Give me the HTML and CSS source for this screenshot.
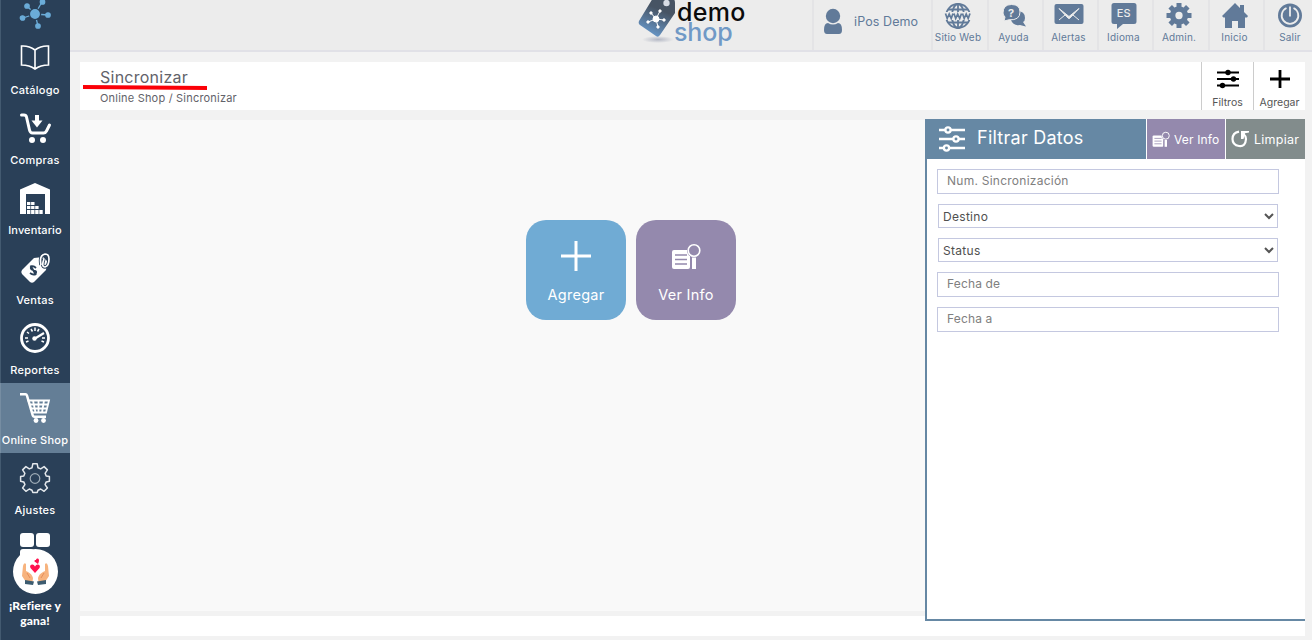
FILE: index.html
```html
<!DOCTYPE html>
<html lang="es">
<head>
<meta charset="utf-8">
<title>Sincronizar</title>
<link rel="stylesheet" href="styles.css">
</head>
<body>
<div class="app">
  <nav class="sidebar">
    <div class="brand"><svg width="32" height="34" viewBox="0 0 32 34"><g stroke="#6bacd8" stroke-width="1.300" fill="#6bacd8"><path d="M16 14 8 6M16 14 23 2M16 14 4 18M16 14 29 15M16 14 19 26"/><circle cx="16" cy="14" r="5.600" stroke="#2a4058"/><circle cx="8" cy="6" r="2.200"/><circle cx="23.500" cy="2" r="2.200"/><circle cx="3.500" cy="18" r="2.200"/><circle cx="29" cy="15" r="2.200"/><circle cx="19" cy="26" r="2.200"/></g></svg></div>
    <a class="nav-item"><svg viewBox="0 0 30 30" fill="none" stroke="#fff" stroke-width="1.600"><path d="M15 7Q9 2.500 1.500 3v19q8 0 13.500 4 5.500-4 13.500-4V3Q21 2.500 15 7v19"/></svg><span>Catálogo</span></a>
    <a class="nav-item"><svg viewBox="0 0 30 30" fill="none" stroke="#fff" stroke-width="3"><path d="M1.500 2H4q2 0 2.500 2l3 13q.7 3 3 3h11q2 0 3-2l3-6" stroke-linecap="round" stroke-linejoin="round"/><path d="M17 2v6" stroke-width="4"/><path d="M11.500 7.500h11L17 14.500z" fill="#fff" stroke="none"/><circle cx="12" cy="27" r="3" fill="#fff" stroke="none"/><circle cx="23" cy="27" r="3" fill="#fff" stroke="none"/></svg><span>Compras</span></a>
    <a class="nav-item"><svg viewBox="0 0 30 30"><path fill="#fff" d="M0 31V6.500L15 0l15 6.500V31h-5V11H6v20z"/><path fill="#fff" d="M7 19h3.400v3H7zm4.100 0h3.400v3h-3.400zM7 23h3.400v3H7zm4.100 0h3.400v3h-3.400zm4.100 0h3.400v3h-3.400zM7 27h3.400v4H7zm4.100 0h3.400v4h-3.400zm4.100 0h3.400v4h-3.400zm4.100 0h3.400v4h-3.400z"/></svg><span class="tight">Inventario</span></a>
    <a class="nav-item"><svg viewBox="0 0 30 30"><path fill="#fff" d="m14 5 9-1 4 4-1 9-12 12q-2 1.500-4 0l-8-8q-1.500-2 0-4z"/><path d="M21 12q-2-10 4-11 4 0 4 5 0 7-4 8-4 0-1-8" fill="none" stroke="#2a4058" stroke-width="3.400"/><path d="M21 12q-2-10 4-11 4 0 4 5 0 7-4 8-4 0-1-8" fill="none" stroke="#fff" stroke-width="1.700"/><path d="M16 15q-3-3-5-1-1 2 2 3 4 1 3 3-2 3-6 0M10.500 12.500l5.500 9.500" fill="none" stroke="#2a4058" stroke-width="1.800"/></svg><span>Ventas</span></a>
    <a class="nav-item"><svg viewBox="0 0 30 30" fill="none" stroke="#fff"><circle cx="15" cy="15" r="13.500" stroke-width="2.800"/><path d="M5 15h3M7 9l2 1.500M11 6l1.500 2.500M15 4.500V8M19 6l-1.500 2.500M25 15h-3M6 19l2.500-1M24 19l-2.500-1" stroke-width="1.500"/><path d="m15 15.500 9-5.500" stroke-width="2.200"/><circle cx="14.500" cy="15.500" r="2.200" fill="#fff" stroke="none"/></svg><span>Reportes</span></a>
    <a class="nav-item active"><svg viewBox="0 0 30 30" fill="none" stroke="#fff" stroke-width="1.800"><path d="M0 1.200h5.500q1 0 1.500 1.500l5.500 19q.5 2 2 2H26" stroke-width="2.500"/><path d="M7.500 7.500H29L26 19.500H11.500M9 11.500h19M10.500 15.500H27M13 7.500l2.500 12M18.500 7.500V19.500M24 7.500l-2 12"/><circle cx="16" cy="27.500" r="2.400" fill="#fff" stroke="none"/><circle cx="23.500" cy="27.500" r="2.400" fill="#fff" stroke="none"/></svg><span>Online Shop</span></a>
    <a class="nav-item"><svg viewBox="0 0 30 30" fill="none" stroke="#e4e8ec" stroke-width="1.500"><path stroke-linejoin="round" d="M12.800.8h4.400l.8 4 2.700 1.100 3.400-2.300 3.300 3.300-2.300 3.400 1.100 2.700 3.200.6v4.600l-3.200.7-1.100 2.700 2.300 3.400-3.300 3.300-3.400-2.300L18 27.200l-.8 2.200h-4.400l-.8-2.200L9.300 26l-3.400 2.300L2.600 25l2.300-3.400-1.100-2.700-3.200-.7v-4.600l3.200-.6 1.100-2.700-2.300-3.400 3.300-3.300 3.400 2.300L12 4.800z"/><circle cx="15" cy="15.500" r="4.800" stroke="#9eabb6" stroke-width="1.200"/></svg><span>Ajustes</span></a>
    <div class="refer">
      <div class="tiles"><i></i><i></i><i></i></div>
      <div class="refer-badge"><svg width="45" height="45" viewBox="0 0 45 45"><circle cx="22.500" cy="22.500" r="22.500" fill="#fff"/><path fill="#ff124f" d="M22 24 17.500 19q-1.300-3 1.500-3.500 2-.2 3 2 1-2.200 3-2 2.800.5 1.500 3.500zM25 15l-3.500-2.500q-.5-2 1.500-1.500 0-2 2-1.500 2 1 0 5.500z"/><g id="hand"><path fill="#f7b37e" d="M13 33 9 27l1-10q1-4 3-2v7l2 1q4 2 5 6l-.5 4z"/><path d="m14 24 3 5" stroke="#e68e5b" fill="none"/><path fill="#3d5c70" d="m12 31 9 1.500-1 3.500-8-1z"/></g><use href="#hand" transform="matrix(-1 0 0 1 45 0)"/></svg></div>
      <div class="refer-text">¡Refiere y<br>gana!</div>
    </div>
  </nav>

  <div class="content">
    <header class="topbar">
      <div class="logo">
        <svg width="40" height="46" viewBox="0 0 40 46"><defs><linearGradient id="tag" x1=".7" y1="0" x2=".3" y2="1"><stop offset=".3" stop-color="#475464"/><stop offset="1" stop-color="#699bcf"/></linearGradient><radialGradient id="shade"><stop stop-color="#b4b8c5"/><stop offset="1" stop-color="#ececec"/></radialGradient></defs><ellipse cx="20" cy="39.500" rx="16" ry="3.500" fill="url(#shade)"/><path fill="url(#tag)" d="M15-2h19q3 1 3 5v10L22 35q-2 3-4 1L2 25q-2-1-1-4z"/><circle cx="28.500" cy="3" r="3.200" fill="#d7dce5"/><g stroke="#fff" stroke-width="1" fill="#fff"><path d="m18 19-5-6M18 19l4-8M18 19l-8 3M18 19l8 1M18 19l2 8"/><circle cx="18" cy="19" r="3"/><circle cx="13" cy="13" r="1.200"/><circle cx="22" cy="11" r="1.200"/><circle cx="10" cy="22" r="1.200"/><circle cx="26" cy="20" r="1.200"/><circle cx="20" cy="27" r="1.200"/></g></svg>
        <div class="wordmark"><b class="w-demo">demo</b><b class="w-shop">shop</b></div>
      </div>
      <div class="user"><svg width="18" height="26" viewBox="0 0 18 26" fill="#617a99"><circle cx="9" cy="8" r="7.200"/><path d="M0 22q0-7 4-7 5 3 10 0 4 0 4 7 0 4-3 4H3q-3 0-3-4"/></svg><span>iPos Demo</span></div>
      <div class="tool w56"><svg viewBox="0 0 30 28"><g fill="none" stroke="#617a99" stroke-width="1.800"><circle cx="15" cy="14" r="12"/><ellipse cx="15" cy="14" rx="6" ry="12"/><path d="M15 2v24M5 7.500h20M5 20.500h20"/></g><path fill="#ececec" d="M1 10h28v8H1z"/><path d="m2.500 11.500 1.700 5 2-4.500 2 4.500 1.800-5m1 0 1.700 5 2-4.500 2 4.500 1.800-5m1 0 1.700 5 2-4.500 2 4.500 1.800-5" fill="none" stroke="#617a99" stroke-width="1.700"/></svg><span>Sitio Web</span></div>
      <div class="tool"><svg viewBox="0 0 30 28"><path fill="#617a99" d="M18 9q8 0 8 7 0 3-2 4l3 4.500-6-1.500q-7 1-9-5z"/><path fill="#617a99" stroke="#ececec" d="M5 19l1-4q-2-2-2-4 0-8.500 8.500-8.500T21 10q0 8.500-11 7.800z"/><text x="9" y="14.500" class="qm">?</text></svg><span>Ayuda</span></div>
      <div class="tool"><svg viewBox="0 0 30 28"><rect x=".5" y="2" width="29" height="20" rx="2" fill="#617a99"/><path d="m5 6.500 10 8 10-8-9.500 10h-1zM5 18l6-5m8 0 6 5" fill="#ececec" stroke="#ececec" stroke-width="1"/></svg><span>Alertas</span></div>
      <div class="tool"><svg viewBox="0 0 30 28"><path fill="#617a99" d="M5 1h20q2.500 0 2.500 2.500v16q0 2.500-2.500 2.500H14l-6 5v-5H5q-2.500 0-2.500-2.500v-16Q2.500 1 5 1"/><text x="7.800" y="14.700" class="es">ES</text></svg><span>Idioma</span></div>
      <div class="tool w56"><svg viewBox="0 0 30 28"><g fill="none" stroke="#617a99"><circle cx="15" cy="13.500" r="6.400" stroke-width="5.500"/><path d="M15 1v5M15 21v5M2.500 13.500h5M22.500 13.500h5M6.200 4.700l3.500 3.500M20.300 18.800l3.500 3.500M6.200 22.300l3.500-3.500M20.300 8.200l3.500-3.500" stroke-width="5"/></g></svg><span>Admin.</span></div>
      <div class="tool"><svg viewBox="0 0 30 28" fill="#617a99"><path d="M15 1 2 14l1.500 1.500H5V26h7v-7h6v7h7V15.500h2L28 14l-4-4V3h-4v3z"/></svg><span>Inicio</span></div>
      <div class="tool last"><svg viewBox="0 0 30 28"><circle cx="15" cy="13.500" r="12" fill="#617a99"/><path d="M11.500 6a8.300 8.300 0 1 0 7 0M15 4.500v10" fill="none" stroke="#ececec" stroke-width="1.800"/></svg><span>Salir</span></div>
    </header>

    <section class="titlebar">
      <div class="titles">
        <h1>Sincronizar</h1>
        <svg class="underline" width="126" height="8" viewBox="0 0 126 8"><path d="M1 3 125 4" stroke="#fb0007" stroke-width="3.800"/></svg>
        <p>Online Shop / Sincronizar</p>
      </div>
      <button class="action"><svg viewBox="0 0 24 22"><path d="M1 4.500h22M1 11h22M1 17.500h22" stroke="#000" stroke-width="2"/><circle cx="12" cy="4.500" r="2.700"/><circle cx="17.500" cy="11" r="2.700"/><circle cx="6.500" cy="17.500" r="2.700"/></svg><span>Filtros</span></button>
      <button class="action"><svg viewBox="0 0 24 22"><path d="M2 11h20M12 2v18" stroke="#000" stroke-width="2.800"/></svg><span>Agregar</span></button>
    </section>

    <main class="workspace">
      <div class="cards">
        <button class="card blue"><svg viewBox="0 0 30 30"><path d="M0 15h30M15 0v30" stroke="#fff" stroke-width="3"/></svg><span>Agregar</span></button>
        <button class="card purple"><svg viewBox="0 0 30 30"><use href="#info"/></svg><span>Ver Info</span></button>
      </div>
      <aside class="panel">
        <div class="panel-head">
          <div class="panel-title"><svg width="26" height="26" viewBox="0 0 26 26" fill="#6688a4" stroke="#fff" stroke-width="2.300"><path d="M0 4h26M0 13h26M0 22h26"/><circle cx="9" cy="4" r="2.600"/><circle cx="17" cy="13" r="2.600"/><circle cx="7.500" cy="22" r="2.600"/></svg><h2>Filtrar Datos</h2></div>
          <button class="panel-btn purple"><svg width="18" height="18" viewBox="0 0 30 30"><g id="info"><rect x="1" y="9" width="18" height="19" rx="2" fill="#fff"/><path d="M4 14h12M4 18.500h12M4 23h12" stroke="#9489ad" stroke-width="1.300"/><circle cx="23" cy="9.500" r="7" fill="#9489ad"/><circle cx="23" cy="9.500" r="5.800" fill="none" stroke="#fff" stroke-width="1.600"/><path d="M20 17v11" stroke="#9489ad" stroke-width="2"/><path d="M23 16.500V28" stroke="#fff" stroke-width="4"/></g></svg><span>Ver Info</span></button>
          <button class="panel-btn grey"><svg width="19" height="18" viewBox="0 0 19 18"><path d="M8 1.700Q1.500 3 1.500 9T8 16t7-7q0-3-2.500-5" fill="none" stroke="#fff" stroke-width="2.200"/><path d="M10 1h8v1.500l-4 .8-1.500 5.700H10z" fill="#fff"/></svg><span class="clear">Limpiar</span></button>
        </div>
        <div class="fields">
          <div class="field num">Num. Sincronización</div>
          <div class="field select"><span>Destino</span><svg width="10" height="7" viewBox="0 0 10 7"><path d="m1 1 4 4 4-4" fill="none" stroke="#555" stroke-width="2"/></svg></div>
          <div class="field select"><span>Status</span><svg width="10" height="7" viewBox="0 0 10 7"><path d="m1 1 4 4 4-4" fill="none" stroke="#555" stroke-width="2"/></svg></div>
          <div class="field">Fecha de</div>
          <div class="field">Fecha a</div>
        </div>
      </aside>
    </main>
    <footer class="footer"></footer>
  </div>
</div>
</body>
</html>
```

FILE: styles.css
```css
* { box-sizing: border-box; }
body { margin: 0; background: #f2f2f2; font-family: Inter, "Open Sans", sans-serif; overflow: hidden; }
button { border: 0; padding: 0; margin: 0; font: inherit; }
h1, h2, p { margin: 0; font-weight: 400; }
svg { display: block; flex: none; }
span { white-space: nowrap; }
.app { display: flex; width: 1312px; height: 640px; }

/* Sidebar */
.sidebar { width: 70px; height: 640px; background: #2a4058; box-shadow: inset 1px 0 #435a70; overflow: hidden; flex: none; color: #fff; }
.brand { height: 33px; display: flex; justify-content: center; }
.nav-item { height: 70px; padding-top: 10px; display: flex; flex-direction: column; align-items: center; font-size: 11px; line-height: 14px; font-weight: 500; letter-spacing: .25px; }
.nav-item .tight { letter-spacing: .1px; }
.nav-item svg { width: 30px; height: 30px; margin-bottom: 10px; overflow: visible; }
.nav-item.active { background: #647e96; box-shadow: inset 1px 0 #768da2; }
.refer { padding-top: 10px; display: flex; flex-direction: column; align-items: center; }
.tiles { width: 30px; height: 30px; display: flex; flex-wrap: wrap; gap: 2px; }
.tiles i { width: 14px; height: 14px; background: #fff; border-radius: 3px; }
.refer-badge { margin-top: -14px; }
.refer-text { margin-top: 4px; font: 900 12px/15px Lato, sans-serif; text-align: center; letter-spacing: .15px; }

/* Header */
.content { flex: 1; min-width: 0; }
.topbar { height: 52px; background: #ececec; border-bottom: 2px solid #e1e1e7; display: flex; color: #617a99; overflow: hidden; }
.logo { width: 742px; padding-left: 568px; display: flex; }
.wordmark { display: flex; flex-direction: column; padding-top: 2px; font-size: 25px; line-height: 20px; margin-left: -1px; }
.wordmark b { font-weight: 500; }
.w-demo { color: #0b0b0b; letter-spacing: .3px; }
.w-shop { color: #7099c6; margin-left: -3px; letter-spacing: -.1px; }
.logo svg { overflow: visible; }
.user { width: 119px; border-left: 2px solid #e4e4e6; padding: 8px 0 0 10px; display: flex; gap: 12px; font-size: 12.500px; line-height: 28px; letter-spacing: .1px; }
.tool { width: 55px; border-left: 2px solid #e4e4e6; display: flex; flex-direction: column; align-items: center; padding: 2px 4px 0 0; font-size: 10px; line-height: 12px; letter-spacing: .2px; }
.tool.w56 { width: 56px; }
.tool.last { width: 49px; padding: 2px 0 0 3px; }
.tool svg { width: 30px; height: 28px; margin-bottom: 1px; }
.qm { font: 700 11px Inter, sans-serif; fill: #ececec; }
.es { font: 500 11px Inter, sans-serif; fill: #ececec; letter-spacing: 0; }

/* Title bar */
.titlebar { margin: 10px 7px 0 10px; height: 48px; background: #fff; display: flex; color: #626269; }
.titles { flex: 1; padding: 5px 0 0 20px; position: relative; }
h1 { font-size: 16px; line-height: 20px; letter-spacing: .25px; }
.titles p { font-size: 11px; line-height: 14px; margin-top: 4px; letter-spacing: .2px; }
.underline { position: absolute; left: 2px; top: 22px; }
.action { width: 52px; border-left: 1px solid #ccc; background: #fff; color: #555; display: flex; flex-direction: column; align-items: center; padding-top: 6px; font-size: 10.500px; line-height: 14px; }
.action svg { width: 24px; height: 22px; margin-bottom: 6px; }

/* Workspace */
.workspace { position: relative; margin: 10px 7px 0 10px; height: 491px; background: #f9f9f9; }
.cards { padding: 100px 0 0 446px; display: flex; gap: 10px; }
.card { width: 100px; height: 100px; border-radius: 20px; color: #fff; display: flex; flex-direction: column; align-items: center; padding-top: 21px; font-size: 14.500px; line-height: 20px; letter-spacing: .25px; }
.card svg { width: 30px; height: 30px; margin-bottom: 14px; }
.blue { background: #70abd4; }
.purple { background: #9489ad; }
.grey { background: #828c8c; }
.footer { margin: 5px 7px 0 10px; height: 20px; background: #fff; }

/* Filter panel, drawn over the workspace and the footer */
.panel { position: absolute; top: -1px; right: 0; width: 380px; height: 502px; background: #fff; border: solid #6688a4; border-width: 0 0 2px 2px; }
.panel-head { height: 40px; display: flex; gap: 1px; color: #fff; }
.panel-title { flex: 1; background: #6688a4; display: flex; align-items: center; padding-left: 12px; gap: 12px; }
h2 { font-size: 18px; line-height: 24px; padding-bottom: 2px; white-space: nowrap; letter-spacing: .25px; }
.panel-btn { width: 78px; color: #fff; display: flex; align-items: center; gap: 4px; padding-left: 5px; font-size: 12px; letter-spacing: .15px; }
.panel-btn.grey { width: 79px; }
.panel-btn .clear { font-size: 12.500px; letter-spacing: .25px; }
.fields { padding: 10px 26px 0 10px; display: flex; flex-direction: column; gap: 10px; }
.field { height: 25px; border: 1px solid #c4c8e0; padding-left: 9px; font-size: 12px; line-height: 22px; color: #808080; background: #fff; letter-spacing: .15px; }
.field.num { letter-spacing: .25px; }
.select { height: 24px; margin: 0 1px; padding: 1px 3px 0 4px; display: flex; align-items: center; justify-content: space-between; color: #505050; letter-spacing: .3px; }
```
